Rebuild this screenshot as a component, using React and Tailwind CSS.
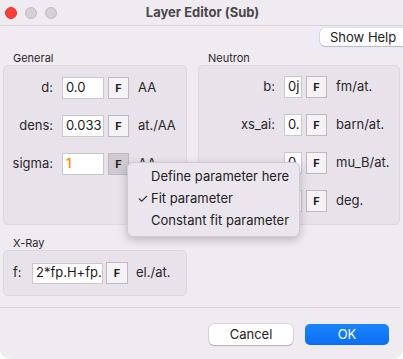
import React from "react";

const font = { fontFamily: "Inter, 'Noto Sans', sans-serif" };

function FBtn({ pressed, w = "w-[21px]" }) {
  return (
    <div
      className={`${w} h-[22px] flex items-center justify-center border border-[#bdb9be] text-[11px] font-bold text-[#1f1d20] ${
        pressed ? "bg-[#cfcbd0]" : "bg-[#f5f3f5]"
      }`}
    >
      F
    </div>
  );
}

function Row({ label, value, unit, labelW, inputW, orange, pressed }) {
  return (
    <div className="flex items-center h-[22px]">
      <div className={`${labelW} text-right text-[13px] text-[#2a272b]`}>{label}</div>
      <div
        className={`ml-[9px] ${inputW} h-[22px] bg-white border border-[#cbc7cc] flex items-center pl-[3px] overflow-hidden whitespace-nowrap text-[13px] ${
          orange ? "text-[#f7930f] font-semibold" : "text-[#1d1b1e]"
        }`}
      >
        {value}
      </div>
      <div className="ml-[4px]">
        <FBtn pressed={pressed} />
      </div>
      <div className="ml-[9px] text-[13px] text-[#2a272b] whitespace-nowrap">{unit}</div>
    </div>
  );
}

export default function App() {
  return (
    <div
      style={font}
      className="w-[403px] h-[359px] bg-[#efebf1] relative overflow-hidden rounded-b-[10px] flex flex-col"
    >
      {/* title bar */}
      <div className="h-[26px] shrink-0 border-b border-[#d6d1d7] flex items-center relative">
        <div className="flex items-center gap-[8px] pl-[5px]">
          <div className="w-[12px] h-[12px] rounded-full bg-[#fd3e37] border border-[#e2342e]" />
          <div className="w-[12px] h-[12px] rounded-full bg-[#d4d0d6] border border-[#c0bcc2]" />
          <div className="w-[12px] h-[12px] rounded-full bg-[#d4d0d6] border border-[#c0bcc2]" />
        </div>
        <div className="flex-1 text-center text-[13px] font-bold text-[#4b474c] pr-[55px]">
          Layer Editor (Sub)
        </div>
      </div>

      {/* show help row */}
      <div className="h-[26px] shrink-0 flex justify-end">
        <div className="w-[90px] h-[26px] bg-[#ecebf7] pl-[7px] pt-[2px]">
          <div className="w-[90px] h-[18px] bg-white rounded-[5px] shadow-[0_0_0_0.5px_rgba(0,0,0,0.15),0_1px_1px_rgba(0,0,0,0.15)] text-[13px] text-[#222] flex items-center pl-[10px] leading-none">
            Show Help
          </div>
        </div>
      </div>

      {/* groups */}
      <div className="px-[3px] grid grid-cols-[184px_202px] gap-x-[11px]">
        <div>
          <div className="h-[13px] leading-[13px] text-[11px] pl-[10px] text-[#2a272b]">General</div>
          <div className="h-[160px] bg-[#e8e3ea] border border-[#ddd8de] rounded-[5px] pt-[11px] flex flex-col gap-[16px]">
            <Row label="d:" value="0.0" unit="AA" labelW="w-[49px]" inputW="w-[42px]" />
            <Row label="dens:" value="0.033" unit="at./AA" labelW="w-[49px]" inputW="w-[42px]" />
            <Row label="sigma:" value="1" unit="AA" labelW="w-[49px]" inputW="w-[42px]" orange pressed />
          </div>
        </div>
        <div>
          <div className="h-[13px] leading-[13px] text-[11px] pl-[10px] text-[#2a272b]">Neutron</div>
          <div className="h-[160px] bg-[#e8e3ea] border border-[#ddd8de] rounded-[5px] pt-[10px] flex flex-col gap-[16px]">
            <Row label="b:" value="0j" unit="fm/at." labelW="w-[76px]" inputW="w-[18px]" />
            <Row label="xs_ai:" value="0." unit="barn/at." labelW="w-[76px]" inputW="w-[18px]" />
            <Row label="" value="0." unit="mu_B/at." labelW="w-[76px]" inputW="w-[18px]" />
            <Row label="" value="0." unit="deg." labelW="w-[76px]" inputW="w-[18px]" />
          </div>
        </div>
      </div>

      {/* x-ray */}
      <div className="px-[3px] mt-[11px]">
        <div className="h-[14px] leading-[14px] text-[11px] pl-[10px] text-[#2a272b]">X-Ray</div>
        <div className="w-[184px] h-[46px] bg-[#e8e3ea] border border-[#ddd8de] rounded-[5px] flex items-center pl-[9px]">
          <div className="w-[19px] text-[13px] text-[#2a272b]">f:</div>
          <div className="w-[71px] h-[21px] bg-white border border-[#cbc7cc] flex items-center pl-[3px] overflow-hidden whitespace-nowrap text-[13px] text-[#1d1b1e]">
            2*fp.H+fp.O
          </div>
          <div className="ml-[3px]">
            <FBtn w="w-[22px]" />
          </div>
          <div className="ml-[8px] text-[13px] text-[#2a272b]">el./at.</div>
        </div>
      </div>

      {/* separator */}
      <div className="mt-[11px] h-px bg-[#d8d3d9] mr-[3px]" />

      {/* buttons */}
      <div className="flex justify-end gap-[12px] pr-[14px] mt-[16px]">
        <div className="w-[84px] h-[21px] bg-white rounded-[5px] shadow-[0_0_0_0.5px_rgba(0,0,0,0.18),0_1px_1px_rgba(0,0,0,0.18)] flex items-center justify-center text-[13px] text-[#222]">
          Cancel
        </div>
        <div className="w-[84px] h-[21px] rounded-[5px] bg-gradient-to-b from-[#1a84fb] to-[#0a6ef5] flex items-center justify-center text-[13px] text-white">
          OK
        </div>
      </div>

      {/* context menu */}
      <div className="absolute left-[127px] top-[162px] w-[173px] h-[75px] rounded-[6px] bg-[#ebe6ed] border border-[#d0cbd1] shadow-[0_3px_10px_rgba(0,0,0,0.22)] pt-[3px]">
        <div className="h-[22px] flex items-center pl-[23px] text-[13px] text-[#222]">Define parameter here</div>
        <div className="h-[22px] flex items-center text-[13px] text-[#222] relative pl-[23px]">
          <span className="absolute left-[9px] text-[13px]">✓</span>
          Fit parameter
        </div>
        <div className="h-[22px] flex items-center pl-[23px] text-[13px] text-[#222]">Constant fit parameter</div>
      </div>
    </div>
  );
}
